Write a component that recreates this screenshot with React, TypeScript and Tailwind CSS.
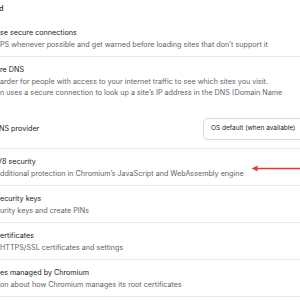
export default function App() {
  const row = "border-t border-[#e8e8e8] pt-[7px] pb-[6px]";
  const title = "text-[#202124] leading-[12px] whitespace-nowrap";
  const sub = "text-[#5f6368] leading-[11px] whitespace-nowrap";
  return (
    <div className="relative w-[300px] h-[300px] overflow-hidden bg-white text-[7.2px] font-[Inter,sans-serif]">
      <div className="pt-[3px] h-[20px] leading-[12px] text-[#202124] font-medium -ml-[1px]">d</div>
      <div className="pt-[7px] pb-[6px]">
        <div className={title}>se secure connections</div>
        <div className={sub}>PS whenever possible and get warned before loading sites that don’t support it</div>
      </div>
      <div className={row}>
        <div className={title}>re DNS</div>
        <div className={sub}>arder for people with access to your internet traffic to see which sites you visit.</div>
        <div className={sub}>n uses a secure connection to look up a site’s IP address in the DNS (Domain Name</div>
        <div className="mt-[20px] mb-[2px] flex items-center h-[22px]">
          <div className={title + " -ml-[1px]"}>NS provider</div>
          <div className="ml-auto -mr-[14px] w-[111px] h-[22px] flex items-center rounded-[5px] border border-[#d6d6d6] pl-[7px] text-[6.5px] text-[#202124] whitespace-nowrap">
            OS default (when available)
          </div>
        </div>
      </div>
      <div className={row}>
        <div className={title + " -ml-[3px]"}>V8 security</div>
        <div className={sub}>dditional protection in Chromium’s JavaScript and WebAssembly engine</div>
      </div>
      <div className={row}>
        <div className={title}>ecurity keys</div>
        <div className={sub}>urity keys and create PINs</div>
      </div>
      <div className={row}>
        <div className={title}>ertificates</div>
        <div className={sub}>HTTPS/SSL certificates and settings</div>
      </div>
      <div className={row}>
        <div className={title}>es managed by Chromium</div>
        <div className={sub}>on about how Chromium manages its root certificates</div>
      </div>
      <div className={row}>
        <div className={title}>&nbsp;</div>
      </div>
      <svg className="absolute left-[251px] top-[165px]" width="49" height="7" viewBox="0 0 49 7">
        <path d="M5 3.5 H49" stroke="#e53a32" strokeWidth="1.3" />
        <path d="M0.5 3.5 L7 0.5 L6 3.5 L7 6.5 Z" fill="#e53a32" />
      </svg>
    </div>
  );
}
